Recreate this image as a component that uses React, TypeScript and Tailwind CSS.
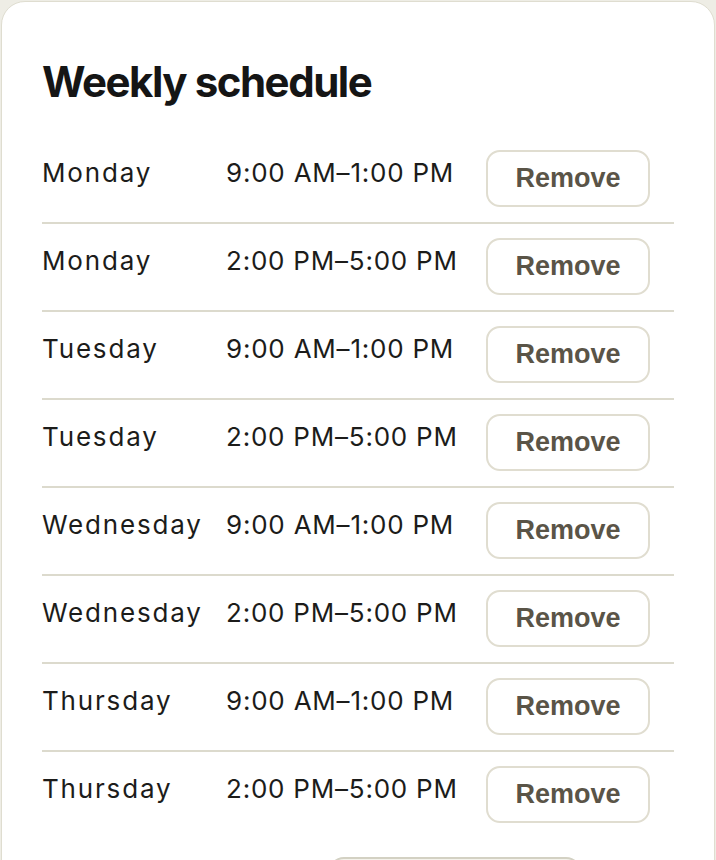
import React from 'react';

type Slot = { id: number; day: string; range: string };

const slots: Slot[] = [
  { id: 1, day: 'Monday', range: '9:00 AM–1:00 PM' },
  { id: 2, day: 'Monday', range: '2:00 PM–5:00 PM' },
  { id: 3, day: 'Tuesday', range: '9:00 AM–1:00 PM' },
  { id: 4, day: 'Tuesday', range: '2:00 PM–5:00 PM' },
  { id: 5, day: 'Wednesday', range: '9:00 AM–1:00 PM' },
  { id: 6, day: 'Wednesday', range: '2:00 PM–5:00 PM' },
  { id: 7, day: 'Thursday', range: '9:00 AM–1:00 PM' },
  { id: 8, day: 'Thursday', range: '2:00 PM–5:00 PM' },
];

const App: React.FC = () => {
  return (
    <div className="min-h-screen bg-[#eeede5] p-[1px] font-['Inter',sans-serif]">
      <div className="rounded-[24px] border border-[#dfddd0] bg-white pl-[40px] pr-[40px] pt-[54px]">
        <h2 className="text-[42px] font-bold leading-[52px] tracking-[-0.035em] text-[#151515]">
          Weekly schedule
        </h2>

        <div className="mt-[28px]">
          {slots.map((slot, i) => (
            <div
              key={slot.id}
              className={`flex items-start pt-[14px] pb-[15px] ${i < slots.length - 1 ? 'border-b-2 border-[#dcdacd]' : ''}`}
            >
              <div className="w-[184px] pt-[5px] text-[26px] leading-[36px] tracking-[0.07em] text-[#1c1c1a]">
                {slot.day}
              </div>
              <div className="w-[260px] pt-[5px] text-[26px] leading-[36px] tracking-[0.03em] text-[#1c1c1a]">
                {slot.range}
              </div>
              <button className="h-[57px] w-[164px] rounded-[14px] border-2 border-[#e0ddd0] bg-white font-['Liberation_Sans',Arial,sans-serif] text-[27px] font-bold text-[#5a5447]">
                Remove
              </button>
            </div>
          ))}
        </div>

        <div className="mt-[19px] flex pl-[286px]">
          <button
            aria-label="Add time"
            className="h-[56px] w-[254px] rounded-[16px] border-2 border-[#d3d1c3] bg-[#f4f3ec]"
          />
        </div>
      </div>
    </div>
  );
};

export default App;
